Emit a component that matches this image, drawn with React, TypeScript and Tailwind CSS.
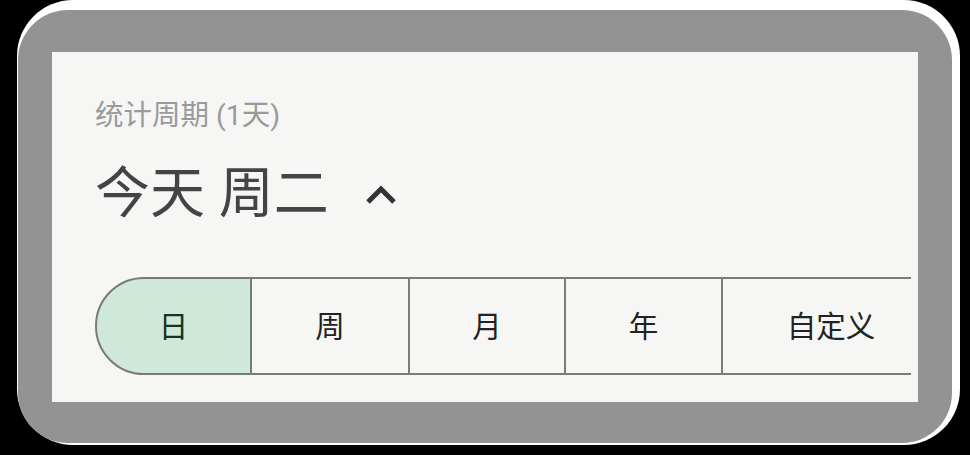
import React from 'react'

const tabs = [
  { label: '日', w: 'w-[157px]', active: true },
  { label: '周', w: 'w-[158px]' },
  { label: '月', w: 'w-[156px]' },
  { label: '年', w: 'w-[157px]' },
  { label: '自定义', w: 'w-[218px]' },
]

function App() {
  return (
    <div className="w-[970px] h-[455px] bg-black overflow-hidden pl-[17px] font-['Roboto','Noto_Sans_CJK_SC',sans-serif]">
      {/* white halo */}
      <div className="w-[943px] h-[445px] rounded-[56px] bg-white pl-px pt-[10px]">
        {/* gray frame */}
        <div className="w-[934px] h-[433px] rounded-[50px] bg-[#939393] pl-[34px] pt-[42px]">
          {/* panel */}
          <div className="w-[866px] h-[350px] bg-[#f6f6f4] pl-[43px] pt-[48px] pr-[7px]">
            <div className="text-[28.5px] leading-[32px] text-[#9a9a9a]">统计周期 (1天)</div>

            <div className="flex items-center mt-[30px] h-[62px]">
              <span className="text-[55px] leading-[62px] text-[#444444]">今天 周二</span>
              <svg className="ml-[36px] mt-[4px]" width="32" height="24" viewBox="0 0 32 24">
                <path d="M3 19 L16 6 L29 19" fill="none" stroke="#333333" strokeWidth="5" />
              </svg>
            </div>

            <div className="mt-[53px] overflow-hidden">
              <div className="flex w-[1000px] h-[98px]">
                {tabs.map((t, i) => (
                  <div
                    key={t.label}
                    className={
                      (t.active
                        ? 'bg-[#cfe8da] text-[#173021] rounded-l-full border-2 '
                        : 'text-[#222222] border-y-2 border-r-2 ') +
                      t.w +
                      ' shrink-0 h-full pt-[3px] border-[#767c77] flex items-center justify-center text-[29.5px]' +
                      (i === tabs.length - 1 ? ' border-r-0' : '')
                    }
                  >
                    {t.label}
                  </div>
                ))}
              </div>
            </div>
          </div>
        </div>
      </div>
    </div>
  )
}

export default App
